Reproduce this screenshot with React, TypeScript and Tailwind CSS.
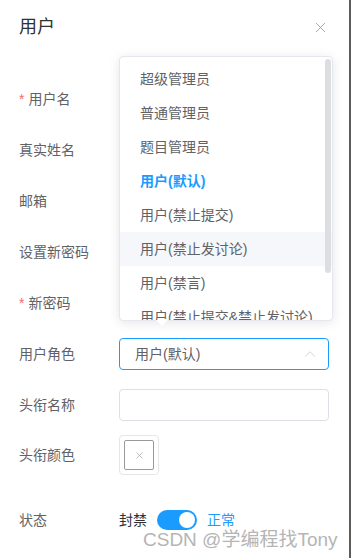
import { X, ChevronUp } from 'lucide-react';

const FONT = '"Liberation Sans", "Noto Sans CJK SC", sans-serif';

const options = [
  '超级管理员',
  '普通管理员',
  '题目管理员',
  '用户(默认)',
  '用户(禁止提交)',
  '用户(禁止发讨论)',
  '用户(禁言)',
  '用户(禁止提交&禁止发讨论)',
];

function Label({ text, required }: { text: string; required?: boolean }) {
  return (
    <div className="w-[100px] shrink-0 text-[14px] text-[#606266]">
      {required && <span className="text-[#f56c6c] mr-[4px]">*</span>}
      {text}
    </div>
  );
}

function Row({ label, required, children }: { label: string; required?: boolean; children?: React.ReactNode }) {
  return (
    <div className="flex items-center h-[32px] mb-[19px]">
      <Label text={label} required={required} />
      {children}
    </div>
  );
}

function TextInput() {
  return <div className="w-[210px] h-[32px] border border-[#dcdfe6] rounded-[4px] bg-white" />;
}

export default function App() {
  return (
    <div className="w-[351px] h-[558px] flex bg-white overflow-hidden relative" style={{ fontFamily: FONT }}>
      <div className="flex-1 flex flex-col">
        {/* header */}
        <div className="flex items-center justify-between pt-[15px] pl-[19px] pr-[20px]">
          <span className="text-[18px] leading-[24px] text-[#303133]">用户</span>
          <X size={17} strokeWidth={1.1} className="text-[#909399]" />
        </div>

        {/* form */}
        <div className="pl-[19px] pt-[44px]">
          <Row label="用户名" required><TextInput /></Row>
          <Row label="真实姓名"><TextInput /></Row>
          <Row label="邮箱"><TextInput /></Row>
          <Row label="设置新密码"><TextInput /></Row>
          <Row label="新密码" required><TextInput /></Row>
          <Row label="用户角色">
            <div className="w-[210px] h-[32px] border border-[#1a9cff] rounded-[4px] flex items-center justify-between pl-[15px] pr-[9px]">
              <span className="text-[14px] text-[#606266]">用户(默认)</span>
              <ChevronUp size={18} strokeWidth={1} className="text-[#c0c4cc]" />
            </div>
          </Row>
          <Row label="头衔名称"><TextInput /></Row>
          <div className="flex items-center h-[40px] -mt-[5px] mb-[35px]">
            <Label text="头衔颜色" />
            <div className="w-[40px] h-[40px] border border-[#e6e6e6] rounded-[4px] p-[4px]">
              <div className="w-full h-full border border-[#999] rounded-[2px] flex items-center justify-center">
                <X size={11} strokeWidth={1.4} className="text-[#a0a0a0]" />
              </div>
            </div>
          </div>
          <div className="flex items-center h-[20px]">
            <Label text="状态" />
            <div className="flex items-center">
              <span className="text-[14px] text-[#303133] mr-[10px]">封禁</span>
              <div className="w-[40px] h-[20px] rounded-full bg-[#1a9cff] flex items-center justify-end pr-[2px]">
                <div className="w-[16px] h-[16px] rounded-full bg-white" />
              </div>
              <span className="text-[14px] text-[#1a9cff] ml-[10px]">正常</span>
            </div>
          </div>
        </div>
      </div>
      <div className="w-[2px] bg-[#5b5b5b]" />

      {/* dropdown popover */}
      <div className="absolute left-[119px] top-[56px] w-[214px] h-[265px] bg-white border border-[#e4e7ed] rounded-[4px] shadow-[0_2px_12px_rgba(0,0,0,0.1)]">
        <div className="h-full overflow-hidden pt-[5px]">
          {options.map((o, i) => (
            <div
              key={o}
              className={
                'h-[34px] leading-[34px] pl-[20px] text-[14px] whitespace-nowrap ' +
                (i === 3 ? 'text-[#1a9cff] font-bold ' : 'text-[#606266] ') +
                (i === 5 ? 'bg-[#f5f7fa]' : '')
              }
            >
              {o}
            </div>
          ))}
        </div>
        <div className="absolute right-[1px] top-[2px] w-[6px] h-[214px] rounded-full bg-[#dddee0]" />
        <div className="absolute left-[36px] -bottom-[6px] w-0 h-0 border-x-[6px] border-x-transparent border-t-[6px] border-t-white" />
      </div>

      {/* watermark */}
      <div
        className="absolute left-[143px] top-[526px] text-[19px] text-[#b5b5b5] whitespace-nowrap"
        style={{ textShadow: '0 0 2px #fff' }}
      >
        CSDN @学编程找Tony
      </div>
    </div>
  );
}
